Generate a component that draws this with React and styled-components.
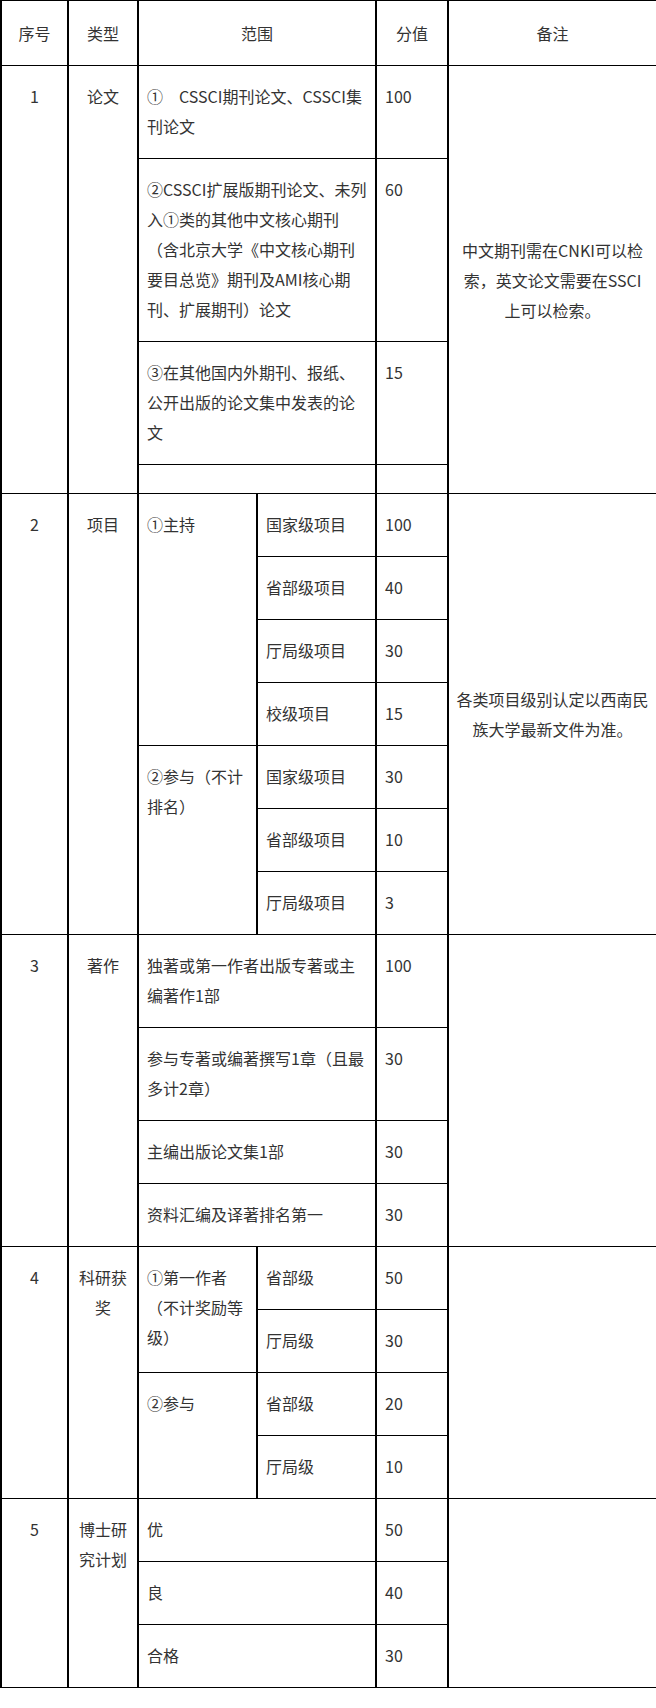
import React from 'react';
import styled, { createGlobalStyle } from "styled-components";

const GlobalStyle = createGlobalStyle`
    html, body {
        margin: 0;
        padding: 0;
        background: #fff;
    }
    body {
        font-family: "Noto Sans CJK SC", "Noto Sans", sans-serif;
        color: #333;
    }
`

const groups = [
    {
        no: "1",
        type: "论文",
        note: "中文期刊需在CNKI可以检索，英文论文需要在SSCI上可以检索。",
        rows: [
            { scope: "①\u3000CSSCI期刊论文、CSSCI集刊论文", score: "100" },
            { scope: "②CSSCI扩展版期刊论文、未列入①类的其他中文核心期刊（含北京大学《中文核心期刊要目总览》期刊及AMI核心期刊、扩展期刊）论文", score: "60" },
            { scope: "③在其他国内外期刊、报纸、公开出版的论文集中发表的论文", score: "15" },
            { scope: "", score: "", empty: true },
        ],
    },
    {
        no: "2",
        type: "项目",
        note: "各类项目级别认定以西南民族大学最新文件为准。",
        rows: [
            { sub: "①主持", span: 4, level: "国家级项目", score: "100" },
            { level: "省部级项目", score: "40" },
            { level: "厅局级项目", score: "30" },
            { level: "校级项目", score: "15" },
            { sub: "②参与（不计排名）", span: 3, level: "国家级项目", score: "30" },
            { level: "省部级项目", score: "10" },
            { level: "厅局级项目", score: "3" },
        ],
    },
    {
        no: "3",
        type: "著作",
        note: "",
        rows: [
            { scope: "独著或第一作者出版专著或主编著作1部", score: "100" },
            { scope: "参与专著或编著撰写1章（且最多计2章）", score: "30" },
            { scope: "主编出版论文集1部", score: "30" },
            { scope: "资料汇编及译著排名第一", score: "30" },
        ],
    },
    {
        no: "4",
        type: "科研获奖",
        note: "",
        rows: [
            { sub: "①第一作者（不计奖励等级）", span: 2, level: "省部级", score: "50" },
            { level: "厅局级", score: "30" },
            { sub: "②参与", span: 2, level: "省部级", score: "20" },
            { level: "厅局级", score: "10" },
        ],
    },
    {
        no: "5",
        type: "博士研究计划",
        note: "",
        rows: [
            { scope: "优", score: "50" },
            { scope: "良", score: "40" },
            { scope: "合格", score: "30" },
        ],
    },
];

function App() {
    return (
        <>
            <GlobalStyle />
            <Table>
                <colgroup>
                    <col style={{ width: 67 }} />
                    <col style={{ width: 70 }} />
                    <col style={{ width: 119 }} />
                    <col style={{ width: 119 }} />
                    <col style={{ width: 72 }} />
                    <col style={{ width: 209 }} />
                </colgroup>
                <thead>
                    <tr>
                        <Head>序号</Head>
                        <Head>类型</Head>
                        <Head colSpan={2}>范围</Head>
                        <Head>分值</Head>
                        <Head>备注</Head>
                    </tr>
                </thead>
                <tbody>
                    {groups.map((group) => {
                        const { no, type, note, rows } = group;

                        return rows.map((row, i) => (
                            <tr key={`${no}-${i}`}>
                                {i === 0 && (
                                    <>
                                        <Cell rowSpan={rows.length} $align="center">{no}</Cell>
                                        <Cell rowSpan={rows.length} $align="center">{type}</Cell>
                                    </>
                                )}
                                {row.level ? (
                                    <>
                                        {row.sub && <Cell rowSpan={row.span}>{row.sub}</Cell>}
                                        <Cell>{row.level}</Cell>
                                    </>
                                ) : (
                                    <Cell colSpan={2} $empty={row.empty}>{row.scope}</Cell>
                                )}
                                <Cell $empty={row.empty}>{row.score}</Cell>
                                {i === 0 && (
                                    <NoteCell rowSpan={rows.length}>{note}</NoteCell>
                                )}
                            </tr>
                        ));
                    })}
                </tbody>
            </Table>
        </>
    )
}

const Table = styled.table`
    width: 656px;
    table-layout: fixed;
    border-collapse: collapse;
    font-size: 16px;
    line-height: 30px;
    color: #333;
`

const Head = styled.th`
    height: 32px;
    padding: 16px 8px;
    font-weight: normal;
    text-align: center;
    vertical-align: middle;
    border-top: 1px solid #000;
    border-bottom: 1px solid #000;
    border-left: 2px solid #000;
    border-right: 2px solid #000;
`

const Cell = styled.td`
    padding: ${props => props.$empty ? "0 8px" : "15px 8px 17px"};
    height: ${props => props.$empty ? "28px" : "auto"};
    text-align: ${props => props.$align || "left"};
    vertical-align: top;
    border-top: 1px solid #000;
    border-bottom: 1px solid #000;
    border-left: 2px solid #000;
    border-right: 2px solid #000;
`

const NoteCell = styled.td`
    padding: 0 7px;
    text-align: center;
    vertical-align: middle;
    border-top: 1px solid #000;
    border-bottom: 1px solid #000;
    border-left: 2px solid #000;
    border-right: 2px solid #000;
`

export default App;
